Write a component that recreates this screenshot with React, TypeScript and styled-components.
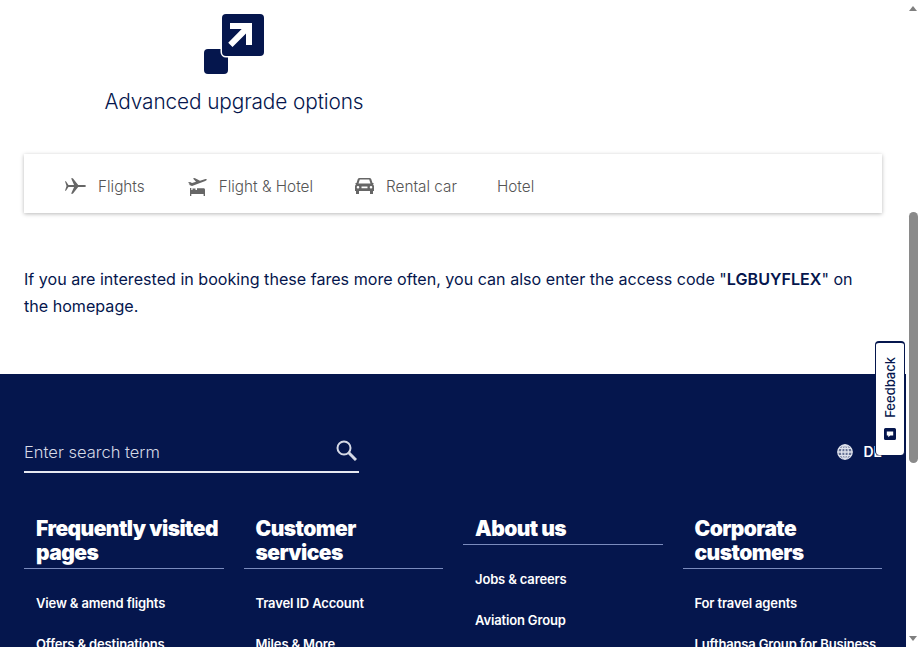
import styled, { createGlobalStyle } from "styled-components";

const navy = "#05164d";

const GlobalStyle = createGlobalStyle`
  html, body {
    margin: 0;
    height: 100%;
    overflow: hidden;
    background: #ffffff;
    font-family: Inter, "Noto Sans", "Liberation Sans", sans-serif;
    color: ${navy};
  }
`;

const tabs = [
  { label: "Flights", icon: <PlaneIcon /> },
  { label: "Flight & Hotel", icon: <FlightHotelIcon /> },
  { label: "Rental car", icon: <CarIcon /> },
  { label: "Hotel" },
];

const columns = [
  { title: "Frequently visited pages", links: ["View & amend flights", "Offers & destinations"] },
  { title: "Customer services", links: ["Travel ID Account", "Miles & More"] },
  { title: "About us", links: ["Jobs & careers", "Aviation Group", "Press"] },
  { title: "Corporate customers", links: ["For travel agents", "Lufthansa Group for Business"] },
];

function UpgradeIcon() {
  return (
    <svg width="61" height="60" viewBox="0 0 61 60">
      <rect x="0" y="35" width="24" height="25" rx="4" fill={navy} />
      <rect x="18" y="0" width="42" height="42" rx="4" fill={navy} stroke="#fff" strokeWidth="3" paintOrder="stroke" />
      <path d="M26 9h22v22h-6V19.500L28.500 33l-4.300-4.300L37.700 15H26z" fill="#fff" />
    </svg>
  );
}

function PlaneIcon() {
  return (
    <svg width="21" height="16" viewBox="0 0 22 16" fill="#666">
      <path d="M0 3h1l2.600 4h5.900L6.400 0h1.800l5.600 7h5.700c1.400 0 2.500.4 2.500 1s-1.100 1-2.500 1h-5.700l-5.600 7H6.400l3.100-7H3.600L1 13H0l1.600-5z" />
    </svg>
  );
}

function FlightHotelIcon() {
  return (
    <svg width="20" height="20" viewBox="0 0 20 20" fill="#666">
      <path d="M1 6.500l2-.6 2 1.200 4-1.300L6 2.600l1.600-.5L13 4.700l4.700-1.500c1.100-.3 2 0 2.200.4.100.5-.6 1-1.600 1.400L5 10 1.700 8.800l1.300-.5z" />
      <path d="M3 12h1.300v2H18v6h-1.400v-2H4.300v2H3zM5.500 14.500V12.600h3v1.900zM10 14v-1.800h6.500c1 0 1.500.6 1.500 1.800z" />
    </svg>
  );
}

function CarIcon() {
  return (
    <svg width="19" height="16" viewBox="0 0 19 16" fill="#666">
      <path d="M4.500 0h10c.8 0 1.400.4 1.700 1.100L17.500 5h1v1.300h-.7c.8.500 1.200 1.200 1.200 2V13h-1v3h-3v-3H4v3H1v-3H0V8.300c0-.8.400-1.500 1.200-2H.5V5h1l1.300-3.900C3.100.4 3.700 0 4.500 0zm.3 1.500L3.500 5.400h12l-1.300-3.900zM3 8a1.300 1.300 0 1 0 0 2.600A1.300 1.300 0 0 0 3 8zm13 0a1.300 1.300 0 1 0 0 2.600A1.300 1.300 0 0 0 16 8zM6.500 8.500v1.800h6V8.500z" />
    </svg>
  );
}

function SearchIcon() {
  return (
    <svg width="21" height="21" viewBox="0 0 21 21" fill="none" stroke="#d5d9e6">
      <circle cx="8" cy="8" r="6.500" strokeWidth="2" />
      <path d="M12.800 12.800L20 20" strokeWidth="3" />
    </svg>
  );
}

function GlobeIcon() {
  return (
    <svg width="16" height="16" viewBox="0 0 16 16" fill="none" stroke="#dfe2ec" strokeWidth="1.300">
      <circle cx="8" cy="8" r="7.200" fill="#dfe2ec" fillOpacity=".45" />
      <ellipse cx="8" cy="8" rx="3.400" ry="7.200" />
      <path d="M8 .8v14.400M.8 8h14.400M1.900 4.300h12.200M1.900 11.700h12.200" />
    </svg>
  );
}

function FeedbackIcon() {
  return (
    <svg width="12" height="12" viewBox="0 0 12 12">
      <path d="M1.500 0h9A1.500 1.500 0 0 1 12 1.500v9a1.500 1.500 0 0 1-1.500 1.500h-9A1.500 1.500 0 0 1 0 10.500v-9A1.500 1.500 0 0 1 1.500 0z" fill={navy} />
      <path d="M2.800 3.500h6.400v4H6.200L4.300 9.200V7.500H2.800z" fill="#fff" />
    </svg>
  );
}

const App = () => {
  return (
    <>
      <GlobalStyle />
      <Viewport>
        <Page>
          <Hero>
            <UpgradeIcon />
            <HeroLabel>Advanced upgrade options</HeroLabel>
          </Hero>
          <TabCard>
            {tabs.map(({ label, icon }) => (
              <Tab key={label}>
                {icon}
                {label}
              </Tab>
            ))}
          </TabCard>
          <Intro>
            If you are interested in booking these fares more often, you can also enter the access
            code "<strong>LGBUYFLEX</strong>" on the homepage.
          </Intro>
          <Footer>
            <SearchRow>
              <SearchBox>
                <span>Enter search term</span>
                <SearchIcon />
              </SearchBox>
              <Language>
                <GlobeIcon />
                DE
              </Language>
            </SearchRow>
            <Columns>
              {columns.map(({ title, links }) => (
                <Column key={title}>
                  <ColumnTitle>{title}</ColumnTitle>
                  <LinkList>
                    {links.map((link) => (
                      <FooterLink key={link}>{link}</FooterLink>
                    ))}
                  </LinkList>
                </Column>
              ))}
            </Columns>
          </Footer>
        </Page>
        <ScrollTrack>
          <ArrowUp />
          <Thumb />
          <ArrowDown />
        </ScrollTrack>
        <FeedbackTab>
          <span>Feedback</span>
          <FeedbackIcon />
        </FeedbackTab>
      </Viewport>
    </>
  );
};

const Viewport = styled.div`
  position: relative;
  display: flex;
  width: 921px;
  height: 647px;
  overflow: hidden;
`;

const Page = styled.main`
  width: 906px;
  flex: none;
  display: flex;
  flex-direction: column;
`;

const Hero = styled.section`
  width: 420px;
  margin: 14px 0 0 24px;
  display: flex;
  flex-direction: column;
  align-items: center;

  svg {
    margin-left: 1px;
  }
`;

const HeroLabel = styled.div`
  margin-top: 15px;
  font-size: 20.800px;
  line-height: 26px;
  font-weight: 300;
  letter-spacing: -0.1px;
`;

const TabCard = styled.nav`
  margin: 39px 24px 0;
  box-sizing: border-box;
  height: 59px;
  padding: 5px 0 0 41px;
  display: flex;
  align-items: center;
  gap: 42px;
  background: #fff;
  box-shadow: 0 1px 4px rgba(0, 0, 0, 0.28);
`;

const Tab = styled.div`
  display: flex;
  align-items: center;
  gap: 12px;
  font-size: 15.300px;
  font-weight: 300;
  color: #555;

  &:last-child {
    margin-left: -2px;
  }
`;

const Intro = styled.p`
  margin: 53px 50px 0 24px;
  height: 108px;
  font-size: 16.100px;
  line-height: 27px;
  font-weight: 400;

  strong {
    font-weight: 600;
  }
`;

const Footer = styled.footer`
  flex: 1;
  min-height: 0;
  overflow: hidden;
  background: ${navy};
  color: #fff;
  padding: 65px 24px 0;
`;

const SearchRow = styled.div`
  display: flex;
  justify-content: space-between;
  align-items: flex-start;
`;

const SearchBox = styled.div`
  box-sizing: border-box;
  width: 335px;
  height: 34px;
  padding: 0 2px 9px 0;
  display: flex;
  align-items: flex-end;
  justify-content: space-between;
  border-bottom: 2px solid #e6e8f0;
  font-size: 16.500px;
  font-weight: 300;
  color: #d5d9e6;

  svg {
    margin-bottom: 1px;
  }
`;

const Language = styled.div`
  margin-top: 4px;
  display: flex;
  align-items: center;
  gap: 10px;
  font-size: 14px;
  font-weight: 600;
`;

const Columns = styled.div`
  margin-top: 44px;
  display: grid;
  grid-template-columns: repeat(4, 1fr);
  gap: 20px;
`;

const Column = styled.div`
  display: flex;
  flex-direction: column;
`;

const ColumnTitle = styled.h3`
  margin: 0;
  padding: 0 0 3px 12px;
  border-bottom: 1px solid #7b8bbd;
  font-size: 21px;
  line-height: 24px;
  font-weight: 900;
  letter-spacing: -0.55px;
`;

const LinkList = styled.div`
  margin-top: 26px;
  padding-left: 12px;
  display: flex;
  flex-direction: column;
  gap: 24px;
`;

const FooterLink = styled.a`
  font-size: 13px;
  line-height: 17px;
  font-weight: 600;
  letter-spacing: -0.15px;
  white-space: nowrap;
`;

const ScrollTrack = styled.aside`
  position: relative;
  flex: 1;
  background: #fff;
`;

const Thumb = styled.div`
  margin: 212px auto 0;
  width: 9px;
  height: 251px;
  border-radius: 5px;
  background: #8a8a8a;
`;

const ArrowUp = styled.div`
  position: absolute;
  top: 6px;
  left: 3px;
  border: 4.500px solid transparent;
  border-top: 0;
  border-bottom: 5px solid #7f7f7f;
`;

const ArrowDown = styled.div`
  position: absolute;
  bottom: 6px;
  left: 3px;
  border: 4.500px solid transparent;
  border-bottom: 0;
  border-top: 5px solid #7f7f7f;
`;

const FeedbackTab = styled.button`
  position: absolute;
  top: 341px;
  left: 875px;
  box-sizing: border-box;
  width: 30px;
  height: 114px;
  padding: 14px 0 15px;
  display: flex;
  flex-direction: column;
  align-items: center;
  justify-content: space-between;
  background: #fff;
  border: 2px solid ${navy};
  border-left-width: 1px;
  border-right-width: 1px;
  border-bottom: 0;
  border-radius: 4px;
  font-family: Inter, "Liberation Sans", Arial, sans-serif;
  font-size: 13px;
  font-weight: 500;
  color: ${navy};

  span {
    writing-mode: vertical-rl;
    transform: rotate(180deg);
  }
`;

export default App;
